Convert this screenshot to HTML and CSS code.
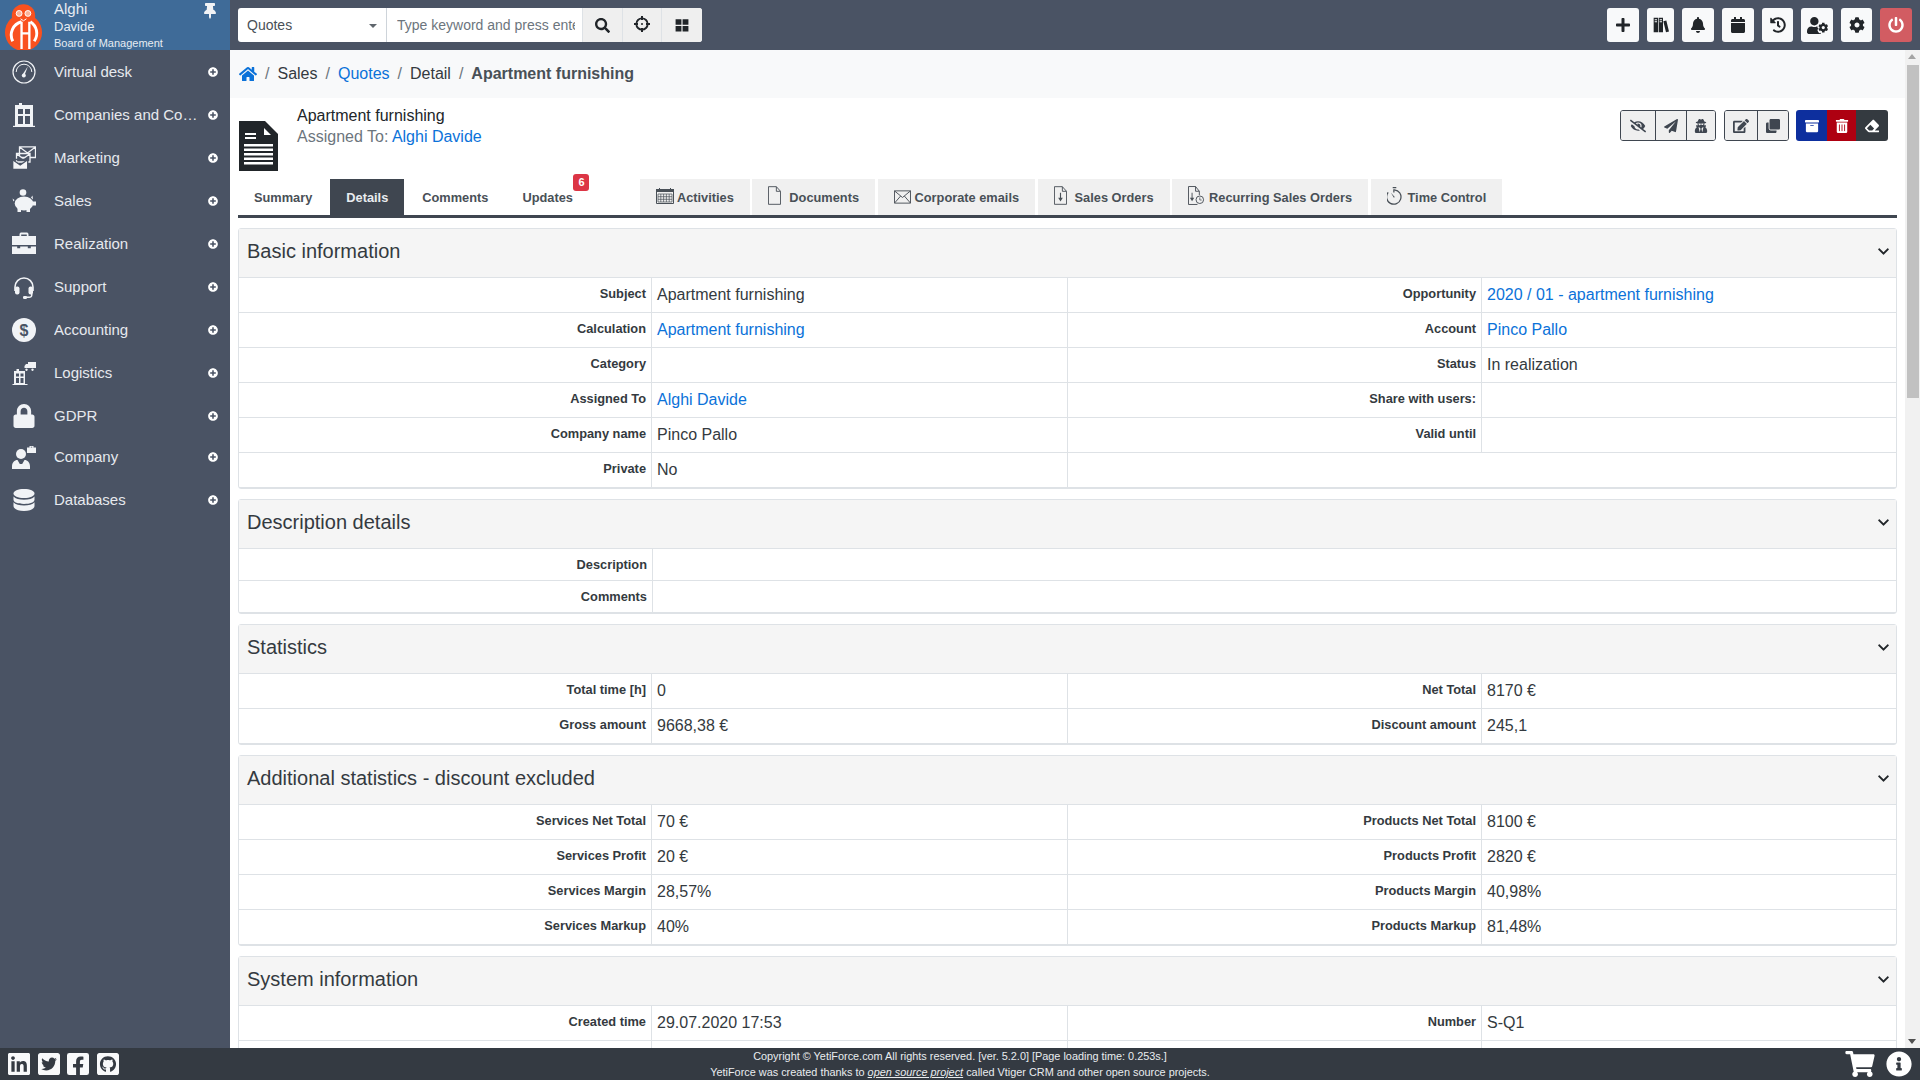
FILE: index.html
```html
<!DOCTYPE html>
<html lang="en">
<head>
  <meta charset="UTF-8" />
  <title>Apartment furnishing - Quotes</title>
  <link rel="stylesheet" href="styles.css">
</head>
<body>

<!-- icon sprite -->
<svg class="sprite" xmlns="http://www.w3.org/2000/svg">
  <symbol id="i-home" viewBox="0 0 576 512"><path d="M280.37 148.26L96 300.11V464a16 16 0 0 0 16 16l112.06-.29a16 16 0 0 0 15.92-16V368a16 16 0 0 1 16-16h64a16 16 0 0 1 16 16v95.64a16 16 0 0 0 16 16.05L464 480a16 16 0 0 0 16-16V300L295.67 148.26a12.19 12.19 0 0 0-15.3 0zM571.6 251.47L488 182.56V44.05a12 12 0 0 0-12-12h-56a12 12 0 0 0-12 12v72.61L318.47 43a48 48 0 0 0-61 0L4.34 251.47a12 12 0 0 0-1.6 16.9l25.5 31A12 12 0 0 0 45.15 301l235.22-193.74a12.19 12.19 0 0 1 15.3 0L530.9 301a12 12 0 0 0 16.9-1.6l25.5-31a12 12 0 0 0-1.7-16.93z"/></symbol>
  <symbol id="i-search" viewBox="0 0 512 512"><path d="M505 442.7L405.3 343c-4.5-4.5-10.6-7-17-7H372c27.6-35.3 44-79.7 44-128C416 93.1 322.9 0 208 0S0 93.1 0 208s93.1 208 208 208c48.3 0 92.7-16.4 128-44v16.3c0 6.4 2.5 12.5 7 17l99.7 99.7c9.4 9.4 24.6 9.4 33.9 0l28.3-28.3c9.4-9.4 9.4-24.6.1-34zM208 336c-70.7 0-128-57.2-128-128 0-70.7 57.2-128 128-128 70.7 0 128 57.2 128 128 0 70.7-57.2 128-128 128z"/></symbol>
  <symbol id="i-plus" viewBox="0 0 448 512"><path d="M416 208H272V64c0-17.67-14.33-32-32-32h-32c-17.67 0-32 14.33-32 32v144H32c-17.67 0-32 14.33-32 32v32c0 17.67 14.33 32 32 32h144v144c0 17.67 14.33 32 32 32h32c17.67 0 32-14.33 32-32V304h144c17.67 0 32-14.33 32-32v-32c0-17.67-14.33-32-32-32z"/></symbol>
  <symbol id="i-bell" viewBox="0 0 448 512"><path d="M224 512c35.32 0 63.97-28.65 63.97-64H160.03c0 35.35 28.65 64 63.97 64zm215.39-149.71c-19.32-20.76-55.47-51.99-55.47-154.29 0-77.7-54.48-139.9-127.94-155.16V32c0-17.67-14.32-32-31.98-32s-31.98 14.33-31.98 32v20.84C118.56 68.1 64.08 130.3 64.08 208c0 102.3-36.15 133.53-55.47 154.29-6 6.45-8.66 14.16-8.61 21.71.11 16.4 12.98 32 32.1 32h383.8c19.12 0 32-15.6 32.1-32 .05-7.55-2.61-15.27-8.61-21.71z"/></symbol>
  <symbol id="i-calendar" viewBox="0 0 448 512"><path d="M12 192h424c6.6 0 12 5.4 12 12v260c0 26.5-21.5 48-48 48H48c-26.5 0-48-21.5-48-48V204c0-6.6 5.4-12 12-12zm436-44v-36c0-26.5-21.5-48-48-48h-48V12c0-6.6-5.4-12-12-12h-40c-6.6 0-12 5.4-12 12v52H160V12c0-6.6-5.4-12-12-12h-40c-6.6 0-12 5.4-12 12v52H48C21.5 64 0 85.5 0 112v36c0 6.6 5.4 12 12 12h424c6.6 0 12-5.4 12-12z"/></symbol>
  <symbol id="i-history" viewBox="0 0 512 512"><path d="M504 255.531c.253 136.64-111.18 248.372-247.82 248.468-59.015.042-113.223-20.53-155.822-54.911-11.077-8.94-11.905-25.541-1.839-35.607l11.267-11.267c8.609-8.609 22.353-9.551 31.891-1.984C173.062 425.135 212.781 440 256 440c101.705 0 184-82.311 184-184 0-101.705-82.311-184-184-184-48.814 0-93.149 18.969-126.068 49.932l50.754 50.754c10.08 10.08 2.941 27.314-11.313 27.314H24c-8.837 0-16-7.163-16-16V38.627c0-14.254 17.234-21.393 27.314-11.314l49.372 49.372C129.209 34.136 189.552 8 256 8c136.81 0 247.747 110.78 248 247.531zm-180.912 78.784l9.823-12.63c8.138-10.463 6.253-25.542-4.21-33.679L288 256.349V152c0-13.255-10.745-24-24-24h-16c-13.255 0-24 10.745-24 24v135.651l65.409 50.874c10.463 8.137 25.541 6.253 33.679-4.21z"/></symbol>
  <symbol id="i-cog" viewBox="0 0 512 512"><path d="M487.4 315.7l-42.6-24.6c4.3-23.2 4.3-47 0-70.2l42.6-24.6c4.9-2.8 7.1-8.6 5.5-14-11.1-35.6-30-67.8-54.7-94.6-3.8-4.1-10-5.1-14.8-2.3L380.8 110c-17.9-15.4-38.5-27.3-60.8-35.1V25.8c0-5.6-3.9-10.5-9.4-11.7-36.7-8.2-74.3-7.8-109.2 0-5.5 1.2-9.4 6.1-9.4 11.7V75c-22.2 7.9-42.8 19.8-60.8 35.1L88.7 85.5c-4.9-2.8-11-1.9-14.8 2.3-24.7 26.7-43.6 58.9-54.7 94.6-1.7 5.4.6 11.2 5.5 14L67.3 221c-4.3 23.2-4.3 47 0 70.2l-42.6 24.6c-4.9 2.8-7.1 8.6-5.5 14 11.1 35.6 30 67.8 54.7 94.6 3.8 4.1 10 5.1 14.8 2.3l42.6-24.6c17.9 15.4 38.5 27.3 60.8 35.1v49.2c0 5.6 3.9 10.5 9.4 11.7 36.7 8.2 74.3 7.8 109.2 0 5.5-1.2 9.4-6.1 9.4-11.7v-49.2c22.2-7.9 42.8-19.8 60.8-35.1l42.6 24.6c4.9 2.8 11 1.9 14.8-2.3 24.7-26.7 43.6-58.9 54.7-94.6 1.5-5.5-.7-11.3-5.6-14.1zM256 336c-44.1 0-80-35.9-80-80s35.9-80 80-80 80 35.9 80 80-35.9 80-80 80z"/></symbol>
  <symbol id="i-power" viewBox="0 0 512 512"><path d="M400 54.1c63 45 104 118.6 104 201.9 0 136.8-110.8 247.7-247.5 248C120 504.3 8.2 393 8 256.4 7.9 173.1 48.9 99.3 111.8 54.2c11.7-8.3 28-4.8 35 7.7L162.6 90c5.9 10.5 3.1 23.8-6.6 31-41.5 30.8-68 79.6-68 134.9-.1 92.3 74.5 168.1 168 168.1 91.6 0 168.6-74.2 168-169.1-.3-51.8-24.7-101.8-68.1-134-9.7-7.2-12.4-20.5-6.5-30.9l15.8-28.1c7-12.4 23.2-16.1 34.8-7.8zM296 264V24c0-13.3-10.7-24-24-24h-32c-13.3 0-24 10.7-24 24v240c0 13.3 10.7 24 24 24h32c13.3 0 24-10.7 24-24z"/></symbol>
  <symbol id="i-plus-circle" viewBox="0 0 512 512"><path d="M256 8C119 8 8 119 8 256s111 248 248 248 248-111 248-248S393 8 256 8zm144 276c0 6.6-5.4 12-12 12h-92v92c0 6.6-5.4 12-12 12h-56c-6.6 0-12-5.4-12-12v-92h-92c-6.6 0-12-5.4-12-12v-56c0-6.6 5.4-12 12-12h92v-92c0-6.6 5.4-12 12-12h56c6.6 0 12 5.4 12 12v92h92c6.6 0 12 5.4 12 12v56z"/></symbol>
  <symbol id="i-chevron" viewBox="0 0 448 512"><path d="M207.029 381.476L12.686 187.132c-9.373-9.373-9.373-24.569 0-33.941l22.667-22.667c9.357-9.357 24.522-9.375 33.901-.04L224 284.505l154.745-154.021c9.379-9.335 24.544-9.317 33.901.04l22.667 22.667c9.373 9.373 9.373 24.569 0 33.941L240.971 381.476c-9.373 9.372-24.569 9.372-33.942 0z"/></symbol>
  <symbol id="i-pin" viewBox="0 0 384 512"><path d="M298.028 214.267L285.793 96H328c13.255 0 24-10.745 24-24V24c0-13.255-10.745-24-24-24H56C42.745 0 32 10.745 32 24v48c0 13.255 10.745 24 24 24h42.207L85.972 214.267C37.465 236.82 0 277.261 0 328c0 13.255 10.745 24 24 24h136v104.007c0 1.242.289 2.467.845 3.578l24 48c2.941 5.882 11.364 5.893 14.311 0l24-48a8.008 8.008 0 0 0 .845-3.578V352h136c13.255 0 24-10.745 24-24-.001-51.183-37.983-91.42-85.973-113.733z"/></symbol>
  <symbol id="i-cart" viewBox="0 0 576 512"><path d="M528.12 301.319l47.273-208C578.806 78.301 567.391 64 551.99 64H159.208l-9.166-44.81C147.758 8.021 137.93 0 126.529 0H24C10.745 0 0 10.745 0 24v16c0 13.255 10.745 24 24 24h69.883l70.248 343.435C147.325 417.1 136 435.222 136 456c0 30.928 25.072 56 56 56s56-25.072 56-56c0-15.674-6.447-29.835-16.824-40h209.647C430.447 426.165 424 440.326 424 456c0 30.928 25.072 56 56 56s56-25.072 56-56c0-22.172-12.888-41.332-31.579-50.405l5.517-24.276c3.413-15.018-8.002-29.319-23.403-29.319H218.117l-6.545-32h293.145c11.206 0 20.92-7.754 23.403-18.681z"/></symbol>
  <symbol id="i-info" viewBox="0 0 512 512"><path d="M256 8C119.043 8 8 119.083 8 256c0 136.997 111.043 248 248 248s248-111.003 248-248C504 119.083 392.957 8 256 8zm0 110c23.196 0 42 18.804 42 42s-18.804 42-42 42-42-18.804-42-42 18.804-42 42-42zm56 254c0 6.627-5.373 12-12 12h-88c-6.627 0-12-5.373-12-12v-24c0-6.627 5.373-12 12-12h12v-64h-12c-6.627 0-12-5.373-12-12v-24c0-6.627 5.373-12 12-12h64c6.627 0 12 5.373 12 12v100h12c6.627 0 12 5.373 12 12v24z"/></symbol>
  <symbol id="i-linkedin" viewBox="0 32 448 448"><path d="M416 32H31.9C14.3 32 0 46.5 0 64.3v383.4C0 465.5 14.3 480 31.9 480H416c17.6 0 32-14.5 32-32.3V64.3c0-17.8-14.4-32.3-32-32.3zM135.4 416H69V202.2h66.5V416zm-33.2-243c-21.3 0-38.5-17.3-38.5-38.5S80.9 96 102.2 96c21.2 0 38.5 17.3 38.5 38.5 0 21.3-17.2 38.5-38.5 38.5zm282.1 243h-66.4V312c0-24.8-.5-56.7-34.5-56.7-34.6 0-39.9 27-39.9 54.9V416h-66.4V202.2h63.7v29.2h.9c8.9-16.8 30.6-34.5 62.9-34.5 67.2 0 79.7 44.3 79.7 101.9V416z"/></symbol>
  <symbol id="i-twitter" viewBox="0 32 448 448"><path d="M400 32H48C21.5 32 0 53.5 0 80v352c0 26.5 21.5 48 48 48h352c26.5 0 48-21.5 48-48V80c0-26.5-21.5-48-48-48zm-48.9 158.8c.2 2.8.2 5.7.2 8.5 0 86.7-66 186.6-186.6 186.6-37.2 0-71.7-10.8-100.7-29.4 5.3.6 10.4.8 15.8.8 30.7 0 58.9-10.4 81.4-28-28.8-.6-53-19.5-61.3-45.5 10.1 1.5 19.2 1.5 29.6-1.2-30-6.1-52.5-32.5-52.5-64.4v-.8c8.7 4.9 18.9 7.9 29.6 8.3a65.447 65.447 0 0 1-29.2-54.6c0-12.2 3.2-23.4 8.9-33.1 32.3 39.8 80.8 65.8 135.2 68.6-9.3-44.5 24-80.6 64-80.6 18.9 0 35.9 7.9 47.9 20.7 14.8-2.8 29-8.3 41.6-15.8-4.9 15.2-15.1 28-28.6 36 13.1-1.4 25.8-5 37.5-10.1-8.9 13.1-20 24.7-32.7 33.9z"/></symbol>
  <symbol id="i-facebook" viewBox="0 32 448 448"><path d="M400 32H48A48 48 0 0 0 0 80v352a48 48 0 0 0 48 48h137.25V327.69h-63V256h63v-54.64c0-62.15 37-96.48 93.67-96.48 27.14 0 55.52 4.84 55.52 4.84v61h-31.27c-30.81 0-40.42 19.12-40.42 38.73V256h68.78l-11 71.69h-57.78V480H400a48 48 0 0 0 48-48V80a48 48 0 0 0-48-48z"/></symbol>
  <symbol id="i-github" viewBox="0 32 448 448"><path d="M400 32H48C21.5 32 0 53.5 0 80v352c0 26.5 21.5 48 48 48h352c26.5 0 48-21.5 48-48V80c0-26.5-21.5-48-48-48zM277.3 415.7c-8.4 1.5-11.5-3.7-11.5-8 0-5.4.2-33 .2-55.3 0-15.6-5.2-25.5-11.3-30.7 37-4.1 76-9.2 76-73.1 0-18.2-6.5-27.3-17.1-39 1.7-4.3 7.4-22-1.7-45-13.9-4.3-45.7 17.9-45.7 17.9-13.2-3.7-27.5-5.6-41.6-5.6-14.1 0-28.4 1.9-41.6 5.6 0 0-31.8-22.2-45.7-17.9-9.1 22.9-3.5 40.6-1.7 45-10.6 11.7-15.6 20.8-15.6 39 0 63.6 37.3 69 74.3 73.1-4.8 4.3-9.1 11.7-10.6 22.3-9.5 4.3-33.8 11.7-48.3-13.9-9.1-15.8-25.5-17.1-25.5-17.1-16.2-.2-1.1 10.2-1.1 10.2 10.8 5 18.4 24.2 18.4 24.2 9.7 29.7 56.1 19.7 56.1 19.7 0 13.9.2 36.5.2 40.6 0 4.3-3 9.5-11.5 8-66-22.1-112.2-84.9-112.2-158.3 0-91.8 70.2-161.5 162-161.5S388 165.6 388 257.4c.1 73.4-44.7 136.3-110.7 158.3z"/></symbol>
  <symbol id="i-plane" viewBox="0 0 512 512"><path d="M476 3.2L12.5 270.6c-18.1 10.4-15.8 35.6 2.2 43.2L121 358.4l287.3-253.2c5.5-4.9 13.3 2.6 8.6 8.3L176 407v80.5c0 23.6 28.5 32.9 42.5 15.8L282 426l124.6 52.2c14.2 6 30.4-2.9 33-18.2l72-432C515 7.8 493.3-6.8 476 3.2z"/></symbol>
  <symbol id="i-edit" viewBox="0 0 576 512"><path d="M402.6 83.2l90.2 90.2c3.8 3.8 3.8 10 0 13.8L274.4 405.6l-92.8 10.3c-12.4 1.4-22.9-9.1-21.5-21.5l10.3-92.8L388.8 83.2c3.8-3.8 10-3.8 13.8 0zm162-22.9l-48.8-48.8c-15.2-15.2-39.9-15.2-55.2 0l-35.4 35.4c-3.8 3.8-3.8 10 0 13.8l90.2 90.2c3.8 3.8 10 3.8 13.8 0l35.4-35.4c15.2-15.3 15.2-40 0-55.2zM384 346.2V448H64V128h229.8c3.2 0 6.2-1.3 8.5-3.5l40-40c7.6-7.6 2.2-20.5-8.5-20.5H48C21.5 64 0 85.5 0 112v352c0 26.5 21.5 48 48 48h352c26.5 0 48-21.5 48-48V306.2c0-10.7-12.9-16-20.5-8.5l-40 40c-2.2 2.3-3.5 5.3-3.5 8.5z"/></symbol>
  <symbol id="i-clone" viewBox="0 0 512 512"><path d="M464 0c26.51 0 48 21.49 48 48v288c0 26.51-21.49 48-48 48H176c-26.51 0-48-21.49-48-48V48c0-26.51 21.49-48 48-48h288M176 416c-44.112 0-80-35.888-80-80V128H48c-26.51 0-48 21.49-48 48v288c0 26.51 21.49 48 48 48h288c26.51 0 48-21.49 48-48v-48H176z"/></symbol>
  <symbol id="i-archive" viewBox="0 0 512 512"><path d="M32 448c0 17.7 14.3 32 32 32h384c17.7 0 32-14.3 32-32V160H32v288zm160-212c0-6.6 5.4-12 12-12h104c6.6 0 12 5.4 12 12v8c0 6.6-5.4 12-12 12H204c-6.6 0-12-5.4-12-12v-8zM480 32H32C14.3 32 0 46.3 0 64v48c0 8.8 7.2 16 16 16h480c8.8 0 16-7.2 16-16V64c0-17.7-14.3-32-32-32z"/></symbol>
  <symbol id="i-trash" viewBox="0 0 448 512"><path d="M32 464a48 48 0 0 0 48 48h288a48 48 0 0 0 48-48V128H32zm272-256a16 16 0 0 1 32 0v224a16 16 0 0 1-32 0zm-96 0a16 16 0 0 1 32 0v224a16 16 0 0 1-32 0zm-96 0a16 16 0 0 1 32 0v224a16 16 0 0 1-32 0zM432 32H312l-9.4-18.7A24 24 0 0 0 281.1 0H166.8a23.72 23.72 0 0 0-21.4 13.3L136 32H16A16 16 0 0 0 0 48v32a16 16 0 0 0 16 16h416a16 16 0 0 0 16-16V48a16 16 0 0 0-16-16z"/></symbol>
  <symbol id="i-eraser" viewBox="0 0 512 512"><path d="M497.941 273.941c18.745-18.745 18.745-49.137 0-67.882l-160-160c-18.745-18.745-49.136-18.746-67.883 0l-256 256c-18.745 18.745-18.745 49.137 0 67.882l96 96A48.004 48.004 0 0 0 144 480h356c6.627 0 12-5.373 12-12v-40c0-6.627-5.373-12-12-12H355.883l142.058-142.059zm-302.627-62.627l137.373 137.373L265.373 416H150.628l-80-80 124.686-124.686z"/></symbol>
  <symbol id="i-eye-slash" viewBox="0 0 640 512"><path d="M320 400c-75.85 0-137.25-58.71-142.9-133.11L72.2 185.82c-13.79 17.3-26.48 35.59-36.72 55.59a32.35 32.35 0 0 0 0 29.19C89.71 376.41 197.07 448 320 448c26.91 0 52.87-4 77.89-10.46L346 397.39a144.13 144.13 0 0 1-26 2.61zm313.82 58.1l-110.55-85.44a331.25 331.25 0 0 0 81.25-102.07 32.35 32.35 0 0 0 0-29.19C550.29 135.59 442.93 64 320 64a308.15 308.15 0 0 0-147.32 37.7L45.46 3.37A16 16 0 0 0 23 6.18L3.37 31.45A16 16 0 0 0 6.18 53.9l588.36 454.73a16 16 0 0 0 22.46-2.81l19.64-25.27a16 16 0 0 0-2.82-22.45zm-183.72-142l-39.3-30.38A94.75 94.75 0 0 0 416 256a94.76 94.76 0 0 0-121.31-92.21A47.65 47.65 0 0 1 304 192a46.64 46.64 0 0 1-1.54 10l-73.61-56.89A142.31 142.31 0 0 1 320 112a143.92 143.92 0 0 1 144 144c0 21.63-5.29 41.79-13.9 60.11z"/></symbol>
  <symbol id="i-secret" viewBox="0 0 448 512"><path d="M383.9 308.3l23.9-62.6c4-10.5-3.7-21.7-15-21.7h-58.5c11-18.9 17.8-40.6 17.8-64v-.3c39.2-7.8 64-19.1 64-31.7 0-13.3-27.3-25.1-70.1-33-9.2-32.8-27-65.8-40.6-82.8-9.5-11.9-25.9-15.6-39.5-8.8l-27.6 13.8c-9 4.5-19.6 4.5-28.6 0L182.1 3.4c-13.6-6.8-30-3.1-39.5 8.8-13.5 17-31.4 50-40.6 82.8-42.7 7.9-70 19.7-70 33 0 12.6 24.8 23.9 64 31.7v.3c0 23.4 6.8 45.1 17.8 64H56.3c-11.5 0-19.2 11.7-14.7 22.3l25.8 60.2C27.3 329.8 0 372.7 0 422.4v44.8C0 491.9 20.1 512 44.8 512h358.4c24.7 0 44.8-20.1 44.8-44.8v-44.8c0-48.4-25.8-90.4-64.1-114.1zM176 480l-41.6-192 49.6 32 24 40-32 120zm96 0l-32-120 24-40 49.6-32L272 480zm41.7-298.5c-3.9 11.9-7 24.6-16.5 33.4-10.1 9.3-48 22.4-64-25-2.8-8.4-15.4-8.4-18.3 0-17 50.2-56 32.4-64 25-9.5-8.8-12.7-21.5-16.5-33.4-.8-2.5-6.3-5.7-6.3-5.8v-10.8c28.3 3.6 61 5.8 96 5.8s67.7-2.1 96-5.8v10.8c-.1.1-5.6 3.2-6.4 5.8z"/></symbol>
  <symbol id="i-user-cog" viewBox="0 0 640 512"><path d="M610.5 341.3c2.6-14.1 2.6-28.5 0-42.6l25.8-14.9c3-1.7 4.3-5.2 3.3-8.5-6.7-21.6-18.2-41.2-33.2-57.4-2.3-2.5-6-3.1-9-1.4l-25.8 14.9c-10.9-9.3-23.4-16.5-36.9-21.3v-29.8c0-3.4-2.4-6.4-5.7-7.1-22.3-5-45-4.8-66.2 0-3.3.7-5.7 3.7-5.7 7.1v29.8c-13.5 4.8-26 12-36.9 21.3l-25.8-14.9c-2.9-1.7-6.7-1.1-9 1.4-15 16.2-26.5 35.8-33.2 57.4-1 3.3.4 6.8 3.3 8.5l25.8 14.9c-2.6 14.1-2.6 28.5 0 42.6l-25.8 14.9c-3 1.7-4.3 5.2-3.3 8.5 6.7 21.6 18.2 41.1 33.2 57.4 2.3 2.5 6 3.1 9 1.4l25.8-14.9c10.9 9.3 23.4 16.5 36.9 21.3v29.8c0 3.4 2.4 6.4 5.7 7.1 22.3 5 45 4.8 66.2 0 3.3-.7 5.7-3.7 5.7-7.1v-29.8c13.5-4.8 26-12 36.9-21.3l25.8 14.9c2.9 1.7 6.7 1.1 9-1.4 15-16.2 26.5-35.8 33.2-57.4 1-3.3-.4-6.8-3.3-8.5l-25.8-14.9zM496 368.5c-26.8 0-48.5-21.8-48.5-48.5s21.8-48.5 48.5-48.5 48.5 21.8 48.5 48.5-21.7 48.5-48.5 48.5zM224 256c70.7 0 128-57.3 128-128S294.7 0 224 0 96 57.3 96 128s57.3 128 128 128zm201.2 226.5c-2.3-1.2-4.6-2.6-6.8-3.9l-7.9 4.6c-6 3.4-12.8 5.3-19.6 5.3-10.9 0-21.4-4.6-28.9-12.6-18.3-19.8-32.3-43.9-40.2-69.6-5.5-17.7 1.9-36.4 17.9-45.7l7.9-4.6c-.1-2.6-.1-5.2 0-7.8l-7.9-4.6c-16-9.2-23.4-28-17.9-45.7.9-2.9 2.2-5.8 3.2-8.7-3.8-.3-7.5-1.2-11.4-1.2h-16.7c-22.2 10.2-46.9 16-72.9 16s-50.6-5.8-72.9-16h-16.7C60.2 288 0 348.2 0 422.4V464c0 26.5 21.5 48 48 48h352c10.1 0 19.5-3.2 27.2-8.5-1.2-3.8-2-7.7-2-11.8v-9.2z"/></symbol>
  <symbol id="i-lock" viewBox="0 0 448 512"><path d="M400 224h-24v-72C376 68.2 307.8 0 224 0S72 68.2 72 152v72H48c-26.5 0-48 21.5-48 48v192c0 26.5 21.5 48 48 48h352c26.5 0 48-21.5 48-48V272c0-26.5-21.5-48-48-48zm-104 0H152v-72c0-39.7 32.3-72 72-72s72 32.3 72 72v72z"/></symbol>
  <symbol id="i-books" viewBox="0 0 24 24"><path d="M1 1h6.500v22H1zM8.500 1H15v22H8.500zM15.500 6.500l4.500-1.200L24 21.800l-4.500 1.200z"/><path fill="#f8f9fa" d="M2.500 3.500h3.500v1.500H2.500zM10 3.500h3.500v1.500H10zM2.500 6.500h3.500V8H2.500zM10 6.500h3.500V8H10z"/></symbol>
  <symbol id="i-target" viewBox="0 0 24 24"><circle cx="12" cy="12" r="8.500" fill="none" stroke="currentColor" stroke-width="2.800"/><path d="M10.500 0h3v6h-3zM10.500 18h3v6h-3zM0 10.500h6v3H0zM18 10.500h6v3h-6z"/><circle cx="12" cy="12" r="1.500"/></symbol>
  <symbol id="i-grid" viewBox="0 0 24 24"><path d="M1 2h10v9.500H1zM13 2h10v9.500H13zM1 13.500h10V23H1zM13 13.500h10V23H13z"/></symbol>

  <!-- sidebar module icons -->
  <symbol id="m-gauge" viewBox="0 0 24 24"><circle cx="12" cy="12" r="11" fill="none" stroke="currentColor" stroke-width="1.200"/><path d="M4.200 12a7.800 7.800 0 0 1 15.600 0" fill="none" stroke="currentColor" stroke-width="1"/><path d="M15.800 6.500l-3 8-1.800-.8z"/><circle cx="11.800" cy="15.600" r="2"/></symbol>
  <symbol id="m-building" viewBox="0 0 24 24"><path fill-rule="evenodd" d="M3 2h4V0h3v2h11v21H3zM6 6v5h5V6zM13 6v5h5V6zM6 13v8h5v-8zM13 13v8h5v-8z"/><path d="M1 22.800h22V24H1z"/></symbol>
  <symbol id="m-mail" viewBox="0 0 24 24"><g fill="none" stroke="currentColor" stroke-width="1.300"><path d="M7.500.8h16v10.700h-16zM7.500 1l8 6 8-6"/><path d="M4.500 7.500h13.500v8.500H4.500zM4.500 7.700l6.700 5 6.800-5" fill="#4a5364"/><path d="M.7 13.500h15v9.800H.7zM.7 13.700l7.500 5.300 7.500-5.300" fill="#f4f5f7" stroke="#4a5364"/></g></symbol>
  <symbol id="m-piggy" viewBox="0 0 24 24"><circle cx="11" cy="3.500" r="3.300"/><ellipse cx="12" cy="14.500" rx="9.300" ry="7"/><path d="M19 8.500l1.500-2 .5 4zM2.500 11l-2-1.500 1 3zM5.500 18h3.500v5H5.500zM14.500 18H18v5h-3.500z"/><path d="M21 12.500h3v4h-3z"/></symbol>
  <symbol id="m-briefcase" viewBox="0 0 24 24"><path fill-rule="evenodd" d="M7.500 4V2.500C7.500 1 8.500.5 9.500.5h5c1 0 2 .5 2 2V4H24v9H0V4zM9.200 4h5.600V2.500H9.200z"/><path d="M0 14.500h5.200v1.800h3v-1.800h7.600v1.800h3v-1.800H24V22H0z"/></symbol>
  <symbol id="m-headset" viewBox="0 0 24 24"><path d="M2.200 12a9.800 9.800 0 0 1 19.600 0v4h-1.600v-4a8.200 8.200 0 0 0-16.400 0v4H2.200z"/><rect x="3" y="11.500" width="4.500" height="8" rx="2"/><rect x="16.500" y="11.500" width="4.500" height="8" rx="2"/><path d="M20.500 18.500v1.500c0 2-1.500 3-3.500 3h-3v-1.400h3c1.300 0 2-.5 2-1.600v-1.500z"/><rect x="11" y="21" width="4" height="3" rx="1.200"/></symbol>
  <symbol id="m-dollar" viewBox="0 0 24 24"><circle cx="12" cy="12" r="12"/><text x="12" y="17.500" text-anchor="middle" font-family="Liberation Sans, sans-serif" font-size="16" font-weight="700" fill="#4a5364">$</text></symbol>
  <symbol id="m-logistics" viewBox="0 0 24 24"><path fill-rule="evenodd" d="M2 10h2.500V8H7v2h6v13H2zM4 12.500v3h3v-3zM8.500 12.500v3h3v-3zM4 17v5h3v-5zM8.500 17v5h3v-5z"/><path d="M.5 23h15v1H.5zM16 1h8v6h-8zM14 3h2v4h-3.500v-2zM14.500 7.500a1.200 1.200 0 1 0 .01 0zM20.500 7.500a1.200 1.200 0 1 0 .01 0z"/></symbol>
  <symbol id="m-company" viewBox="0 0 24 24"><circle cx="9" cy="9" r="5"/><path d="M0 24v-2.500c0-4 2.500-6.500 5.500-6.500l2.300 4h2.400l2.300-4c3 0 5.500 2.500 5.500 6.500V24z"/><path fill-rule="evenodd" d="M15 2.500h2.500V1h4v1.500H24V8h-9zM18.800 1.800v.7h1.400v-.7z"/></symbol>
  <symbol id="m-database" viewBox="0 0 24 24"><path d="M12 1C5.800 1 1.500 3 1.500 5.500S5.800 10 12 10s10.500-2 10.500-4.500S18.200 1 12 1z"/><path d="M1.500 8.500c1.800 2.300 5.800 3.300 10.500 3.300s8.700-1 10.500-3.300v3.300c0 2.400-4.300 4.200-10.500 4.200S1.500 14.200 1.500 11.800z"/><path d="M1.500 14.300c1.800 2.300 5.800 3.300 10.500 3.300s8.700-1 10.500-3.300V18c0 2.600-4.300 5-10.500 5S1.500 20.600 1.500 18z"/></symbol>

  <!-- related tab icons -->
  <symbol id="t-calendar" viewBox="0 0 18 16"><path fill="none" stroke="currentColor" d="M.5 1.500h17v14H.5z"/><path d="M0 1h18v3H0zM3 0h1v2H3zM14 0h1v2h-1z"/><path fill="none" stroke="currentColor" stroke-width=".7" d="M2 6h14v8H2zM2 8.700h14M2 11.300h14M4.800 6v8M7.600 6v8M10.400 6v8M13.200 6v8"/></symbol>
  <symbol id="t-doc" viewBox="0 0 14 20"><path fill="none" stroke="currentColor" d="M.5.500h8.500l4.500 5v14H.5zM9 .500v5h4.500"/></symbol>
  <symbol id="t-mail" viewBox="0 0 18 14"><path fill="none" stroke="currentColor" d="M.5.500h17v13H.5zM.5.500l8.500 7 8.500-7M.5 13.500l6.500-7.500M17.500 13.500l-6.500-7.500"/></symbol>
  <symbol id="t-doc-down" viewBox="0 0 14 20"><path fill="none" stroke="currentColor" d="M.5.500h8.500l4.500 5v14H.5zM9 .500v5h4.500"/><path d="M6.400 7h1.200v7h-1.200zM4.500 12.500h5L7 16.500z"/></symbol>
  <symbol id="t-doc-clock" viewBox="0 0 18 20"><path fill="none" stroke="currentColor" d="M10 19.500H.5V.5h7.500l4 5v4M8 .5v5h4"/><path d="M3.800 7h1v7h-1zM2 12.500h4.600L4.300 16z"/><circle cx="12.500" cy="14.500" r="4" fill="none" stroke="currentColor"/><path fill="none" stroke="currentColor" stroke-width=".8" d="M12.500 12v2.800h2"/></symbol>
  <symbol id="t-stopwatch" viewBox="0 0 16 20"><path d="M1.500 6.500A7.300 7.300 0 1 0 8 3.800V6.200h-1.400V2.400H8a8.700 8.700 0 1 1-7.600 3.200z"/><path d="M6 0h4v1.500H6zM4 6.500l4.300 4.500-1 1z"/></symbol>
</svg>

<div class="app">
  <div class="shell">

    <!-- left menu -->
    <aside class="sidebar">
      <div class="user-box">
        <svg class="user-logo" viewBox="0 0 40 54">
          <circle cx="20" cy="12" r="12" fill="#f9511f"/>
          <circle cx="20" cy="29" r="19" fill="#f9511f"/>
          <circle cx="15.500" cy="9.500" r="3" fill="#fbb49b" stroke="#fff" stroke-width="1"/>
          <circle cx="24.500" cy="9.500" r="3" fill="#fbb49b" stroke="#fff" stroke-width="1"/>
          <path d="M17 15l3 2 3-2" fill="none" stroke="#fff" stroke-width="1"/>
          <path d="M9 38A14 14 0 0 1 18 18M27 18A14 14 0 0 1 31 38" fill="none" stroke="#fff" stroke-width="3"/>
          <path d="M18 18v28M26 18v28M18 30h8" fill="none" stroke="#fff" stroke-width="2.400"/>
        </svg>
        <div class="user-text">
          <div class="user-first">Alghi</div>
          <div class="user-last">Davide</div>
          <div class="user-role">Board of Management</div>
        </div>
        <svg class="user-pin"><use href="#i-pin"/></svg>
      </div>
      <nav class="menu">
        <a class="menu-item"><svg class="menu-icon"><use href="#m-gauge"/></svg><span class="menu-label">Virtual desk</span><svg class="menu-plus"><use href="#i-plus-circle"/></svg></a>
        <a class="menu-item"><svg class="menu-icon"><use href="#m-building"/></svg><span class="menu-label">Companies and Contacts</span><svg class="menu-plus"><use href="#i-plus-circle"/></svg></a>
        <a class="menu-item"><svg class="menu-icon"><use href="#m-mail"/></svg><span class="menu-label">Marketing</span><svg class="menu-plus"><use href="#i-plus-circle"/></svg></a>
        <a class="menu-item"><svg class="menu-icon"><use href="#m-piggy"/></svg><span class="menu-label">Sales</span><svg class="menu-plus"><use href="#i-plus-circle"/></svg></a>
        <a class="menu-item"><svg class="menu-icon"><use href="#m-briefcase"/></svg><span class="menu-label">Realization</span><svg class="menu-plus"><use href="#i-plus-circle"/></svg></a>
        <a class="menu-item"><svg class="menu-icon"><use href="#m-headset"/></svg><span class="menu-label">Support</span><svg class="menu-plus"><use href="#i-plus-circle"/></svg></a>
        <a class="menu-item"><svg class="menu-icon"><use href="#m-dollar"/></svg><span class="menu-label">Accounting</span><svg class="menu-plus"><use href="#i-plus-circle"/></svg></a>
        <a class="menu-item"><svg class="menu-icon"><use href="#m-logistics"/></svg><span class="menu-label">Logistics</span><svg class="menu-plus"><use href="#i-plus-circle"/></svg></a>
        <a class="menu-item"><svg class="menu-icon"><use href="#i-lock"/></svg><span class="menu-label">GDPR</span><svg class="menu-plus"><use href="#i-plus-circle"/></svg></a>
        <a class="menu-item menu-item-tight"><svg class="menu-icon"><use href="#m-company"/></svg><span class="menu-label">Company</span><svg class="menu-plus"><use href="#i-plus-circle"/></svg></a>
        <a class="menu-item"><svg class="menu-icon"><use href="#m-database"/></svg><span class="menu-label">Databases</span><svg class="menu-plus"><use href="#i-plus-circle"/></svg></a>
      </nav>
    </aside>

    <div class="main">
      <!-- top bar -->
      <header class="topbar">
        <div class="search">
          <div class="search-module">Quotes<span class="caret"></span></div>
          <input class="search-input" type="text" placeholder="Type keyword and press enter">
          <button class="search-btn"><svg class="icon-15"><use href="#i-search"/></svg></button>
          <button class="search-btn search-btn-narrow"><svg class="icon-16 icon-up"><use href="#i-target"/></svg></button>
          <button class="search-btn search-btn-last"><svg class="icon-14"><use href="#i-grid"/></svg></button>
        </div>
        <div class="top-actions">
          <button class="top-btn"><svg class="icon-16"><use href="#i-plus"/></svg></button>
          <button class="top-btn top-btn-small"><svg class="icon-16"><use href="#i-books"/></svg></button>
          <button class="top-btn"><svg class="icon-16"><use href="#i-bell"/></svg></button>
          <button class="top-btn"><svg class="icon-16"><use href="#i-calendar"/></svg></button>
          <button class="top-btn top-btn-mid"><svg class="icon-16"><use href="#i-history"/></svg></button>
          <button class="top-btn"><svg class="icon-20"><use href="#i-user-cog"/></svg></button>
          <button class="top-btn top-btn-mid"><svg class="icon-16"><use href="#i-cog"/></svg></button>
          <button class="top-btn top-btn-power"><svg class="icon-16"><use href="#i-power"/></svg></button>
        </div>
      </header>

      <div class="view">
        <div class="page">
          <div class="breadcrumb">
            <svg class="crumb-home"><use href="#i-home"/></svg>
            <span class="crumb-sep">/</span><span>Sales</span>
            <span class="crumb-sep">/</span><a class="link">Quotes</a>
            <span class="crumb-sep">/</span><span>Detail</span>
            <span class="crumb-sep">/</span><b class="crumb-last">Apartment furnishing</b>
          </div>

          <div class="record-head">
            <svg class="record-icon" viewBox="0 0 39 50">
              <path d="M0 0h26l13 13v37H0z" fill="#212529"/>
              <path d="M25 7v7h7z" fill="#fff"/>
              <path d="M6 12h11v2H6zM6 16h11v2H6zM5 23h29v2.500H5zM5 27.500h29V30H5zM5 32h29v2.500H5zM5 36.500h29V39H5zM5 41h29v2.500H5z" fill="#fff"/>
            </svg>
            <div class="record-title">
              <div>Apartment furnishing</div>
              <div class="record-sub">Assigned To: <a class="link">Alghi Davide</a></div>
            </div>
            <div class="record-actions">
              <div class="btn-group btn-group-outline btn-group-first">
                <button class="act act-eye"><svg class="icon-16"><use href="#i-eye-slash"/></svg></button>
                <button class="act act-plane"><svg class="icon-14"><use href="#i-plane"/></svg></button>
                <button class="act act-secret"><svg class="icon-14"><use href="#i-secret"/></svg></button>
              </div>
              <div class="btn-group btn-group-outline">
                <button class="act act-edit"><svg class="icon-16"><use href="#i-edit"/></svg></button>
                <button class="act act-clone"><svg class="icon-14"><use href="#i-clone"/></svg></button>
              </div>
              <div class="btn-group">
                <button class="act act-fill act-blue"><svg class="icon-14"><use href="#i-archive"/></svg></button>
                <button class="act act-fill act-red"><svg class="icon-14"><use href="#i-trash"/></svg></button>
                <button class="act act-fill act-dark"><svg class="icon-14"><use href="#i-eraser"/></svg></button>
              </div>
            </div>
          </div>

          <div class="tabs">
            <a class="tab">Summary</a>
            <a class="tab tab-active">Details</a>
            <a class="tab">Comments</a>
            <a class="tab tab-updates">Updates<span class="tab-badge">6</span></a>
            <a class="tab-rel tab-rel-first"><svg class="rel-18"><use href="#t-calendar"/></svg>Activities</a>
            <a class="tab-rel"><svg class="rel-doc"><use href="#t-doc"/></svg>Documents</a>
            <a class="tab-rel"><svg class="rel-mail"><use href="#t-mail"/></svg>Corporate emails</a>
            <a class="tab-rel"><svg class="rel-doc"><use href="#t-doc-down"/></svg>Sales Orders</a>
            <a class="tab-rel"><svg class="rel-clock"><use href="#t-doc-clock"/></svg>Recurring Sales Orders</a>
            <a class="tab-rel"><svg class="rel-watch"><use href="#t-stopwatch"/></svg>Time Control</a>
          </div>

          <section class="panel">
            <div class="panel-head"><h4>Basic information</h4><svg class="chevron"><use href="#i-chevron"/></svg></div>
            <div class="fields">
              <div class="lbl">Subject</div><div class="val">Apartment furnishing</div>
              <div class="lbl">Opportunity</div><div class="val val-end"><a class="link">2020 / 01 - apartment furnishing</a></div>
              <div class="lbl">Calculation</div><div class="val"><a class="link">Apartment furnishing</a></div>
              <div class="lbl">Account</div><div class="val val-end"><a class="link">Pinco Pallo</a></div>
              <div class="lbl">Category</div><div class="val"></div>
              <div class="lbl">Status</div><div class="val val-end">In realization</div>
              <div class="lbl">Assigned To</div><div class="val"><a class="link">Alghi Davide</a></div>
              <div class="lbl">Share with users:</div><div class="val val-end"></div>
              <div class="lbl">Company name</div><div class="val">Pinco Pallo</div>
              <div class="lbl">Valid until</div><div class="val val-end"></div>
              <div class="lbl">Private</div><div class="val">No</div>
              <div class="val val-blank"></div>
            </div>
          </section>

          <section class="panel">
            <div class="panel-head"><h4>Description details</h4><svg class="chevron"><use href="#i-chevron"/></svg></div>
            <div class="fields fields-wide">
              <div class="lbl">Description</div><div class="val val-end"></div>
              <div class="lbl">Comments</div><div class="val val-end"></div>
            </div>
          </section>

          <section class="panel">
            <div class="panel-head"><h4>Statistics</h4><svg class="chevron"><use href="#i-chevron"/></svg></div>
            <div class="fields">
              <div class="lbl">Total time [h]</div><div class="val">0</div>
              <div class="lbl">Net Total</div><div class="val val-end">8170 €</div>
              <div class="lbl">Gross amount</div><div class="val">9668,38 €</div>
              <div class="lbl">Discount amount</div><div class="val val-end">245,1</div>
            </div>
          </section>

          <section class="panel">
            <div class="panel-head"><h4>Additional statistics - discount excluded</h4><svg class="chevron"><use href="#i-chevron"/></svg></div>
            <div class="fields">
              <div class="lbl">Services Net Total</div><div class="val">70 €</div>
              <div class="lbl">Products Net Total</div><div class="val val-end">8100 €</div>
              <div class="lbl">Services Profit</div><div class="val">20 €</div>
              <div class="lbl">Products Profit</div><div class="val val-end">2820 €</div>
              <div class="lbl">Services Margin</div><div class="val">28,57%</div>
              <div class="lbl">Products Margin</div><div class="val val-end">40,98%</div>
              <div class="lbl">Services Markup</div><div class="val">40%</div>
              <div class="lbl">Products Markup</div><div class="val val-end">81,48%</div>
            </div>
          </section>

          <section class="panel">
            <div class="panel-head"><h4>System information</h4><svg class="chevron"><use href="#i-chevron"/></svg></div>
            <div class="fields">
              <div class="lbl">Created time</div><div class="val">29.07.2020 17:53</div>
              <div class="lbl">Number</div><div class="val val-end">S-Q1</div>
              <div class="lbl"></div><div class="val"></div>
              <div class="lbl"></div><div class="val val-end"></div>
            </div>
          </section>
        </div>

        <!-- page scrollbar -->
        <div class="scrollbar">
          <span class="scroll-up"></span>
          <span class="scroll-thumb"></span>
          <span class="scroll-down"></span>
        </div>
      </div>
    </div>
  </div>

  <footer class="footer">
    <div class="footer-social">
      <svg class="social"><use href="#i-linkedin"/></svg>
      <svg class="social"><use href="#i-twitter"/></svg>
      <svg class="social"><use href="#i-facebook"/></svg>
      <svg class="social"><use href="#i-github"/></svg>
    </div>
    <div class="footer-text">
      <div>Copyright © YetiForce.com All rights reserved. [ver. 5.2.0] [Page loading time: 0.253s.]</div>
      <div>YetiForce was created thanks to <a class="footer-link">open source project</a> called Vtiger CRM and other open source projects.</div>
    </div>
    <div class="footer-right">
      <svg class="footer-cart"><use href="#i-cart"/></svg>
      <svg class="footer-info"><use href="#i-info"/></svg>
    </div>
  </footer>
</div>

</body>
</html>
```

FILE: styles.css
```css
* {
  box-sizing: border-box;
}
html, body {
  margin: 0;
  padding: 0;
  height: 100%;
  overflow: hidden;
  font-family: "Liberation Sans", Arial, sans-serif;
  font-size: 16px;
  color: #212529;
  background: #fff;
}
svg {
  fill: currentColor;
  display: block;
  flex: none;
}
.sprite {
  display: none;
}
button {
  border: 0;
  padding: 0;
  margin: 0;
  font: inherit;
  color: inherit;
  display: flex;
  align-items: center;
  justify-content: center;
}
.link {
  color: #0b72d9;
}
.icon-14 { width: 14px; height: 14px; }
.icon-15 { width: 15px; height: 15px; }
.icon-16 { width: 16px; height: 16px; }
.icon-20 { width: 21px; height: 17px; }
.icon-up { margin-top: -3px; }

.app {
  height: 100vh;
  display: flex;
  flex-direction: column;
}
.shell {
  flex: 1;
  min-height: 0;
  display: flex;
}

/* sidebar */
.sidebar {
  width: 230px;
  flex: none;
  background: #4a5364;
  color: #f1f3f6;
}
.user-box {
  height: 50px;
  background: #3f6b98;
  display: flex;
  overflow: hidden;
  position: relative;
}
.user-logo {
  width: 39px;
  height: 53px;
  margin: 4px 0 0 4px;
}
.user-text {
  margin-left: 11px;
  color: #e6ebf2;
}
.user-first {
  font-size: 15px;
  line-height: 18px;
}
.user-last {
  font-size: 13px;
  line-height: 18px;
}
.user-role {
  font-size: 11px;
  line-height: 14px;
}
.user-pin {
  width: 12px;
  height: 16px;
  position: absolute;
  top: 3px;
  right: 14px;
}
.menu-item {
  height: 43px;
  display: flex;
  align-items: center;
  padding: 0 12px;
}
.menu-item-tight {
  margin-top: -2px;
}
.menu-icon {
  width: 24px;
  height: 24px;
}
.menu-label {
  margin-left: 18px;
  width: 144px;
  font-size: 15px;
  color: #e6e9ee;
  white-space: nowrap;
  overflow: hidden;
  text-overflow: ellipsis;
}
.menu-plus {
  width: 10px;
  height: 10px;
  margin-left: 10px;
  color: #fff;
}

/* top bar */
.main {
  flex: 1;
  min-width: 0;
  display: flex;
  flex-direction: column;
}
.topbar {
  height: 50px;
  flex: none;
  background: #4a5364;
  display: flex;
  justify-content: space-between;
  align-items: center;
  padding: 0 8px;
}
.search {
  display: flex;
  height: 34px;
  width: 464px;
  background: #fff;
  border-radius: 3px;
  font-size: 14px;
  overflow: hidden;
}
.search-module {
  width: 149px;
  padding-left: 9px;
  line-height: 34px;
  color: #495057;
  position: relative;
  border-right: 1px solid #ced4da;
}
.caret {
  position: absolute;
  right: 9px;
  top: 16px;
  border: 4px solid transparent;
  border-top: 4px solid #5f666d;
  border-bottom: 0;
}
.search-input {
  width: 195px;
  border: 0;
  padding: 0 7px 0 10px;
  font: inherit;
  color: #495057;
  outline: none;
}
.search-input::placeholder {
  color: #6c757d;
  opacity: 1;
}
.search-btn {
  width: 40px;
  border-left: 1px solid #dee2e6;
  color: #212529;
}
.search-btn-narrow { width: 39px; }
.search-btn-last { width: 41px; }
.top-actions {
  display: flex;
  gap: 8px;
}
.top-btn {
  width: 32px;
  height: 34px;
  background: #f8f9fa;
  border-radius: 3px;
  color: #212529;
}
.top-btn-small { width: 27px; }
.top-btn-mid { width: 31px; }
.top-btn-power {
  background: #d25c62;
  color: #fff;
}

/* page */
.view {
  flex: 1;
  min-height: 0;
  display: flex;
}
.page {
  flex: 1;
  min-width: 0;
  overflow: hidden;
}
.scrollbar {
  width: 15px;
  flex: none;
  background: #f1f1f1;
  position: relative;
}
.scroll-up, .scroll-down {
  position: absolute;
  left: 3px;
  border: 4.5px solid transparent;
}
.scroll-up {
  top: 4px;
  border-top: 0;
  border-bottom: 5px solid #a3a3a3;
}
.scroll-down {
  bottom: 4px;
  border-bottom: 0;
  border-top: 5px solid #505050;
}
.scroll-thumb {
  position: absolute;
  top: 15px;
  left: 2px;
  right: 1px;
  height: 333px;
  background: #c1c1c1;
}

.breadcrumb {
  height: 48px;
  background: #f8f9fa;
  display: flex;
  align-items: center;
  padding-left: 9px;
  color: #343a40;
}
.crumb-home {
  width: 18px;
  height: 16px;
  color: #0b72d9;
}
.crumb-sep {
  color: #6c757d;
  margin: 0 8px;
}
.crumb-last {
  color: #495057;
}

.record-head {
  height: 81px;
  display: flex;
  padding: 7px 17px 0 9px;
}
.record-icon {
  width: 39px;
  height: 50px;
  margin-top: 16px;
}
.record-title {
  margin-left: 19px;
  line-height: 21px;
}
.record-sub {
  color: #6c757d;
}
.record-actions {
  margin-left: auto;
  display: flex;
  gap: 7px;
  padding-top: 5px;
  height: 36px;
}
.btn-group {
  display: flex;
  height: 31px;
  border-radius: 3px;
  overflow: hidden;
}
.btn-group-outline {
  border: 1px solid #3f4650;
  color: #3f4650;
}
.btn-group-first {
  margin-right: 1px;
}
.btn-group-outline .act + .act {
  border-left: 1px solid #3f4650;
}
.act-eye { width: 34px; }
.act-plane { width: 31px; }
.act-secret { width: 29px; }
.act-edit { width: 32px; }
.act-clone { width: 31px; }
.act-fill { color: #fff; }
.act-blue { width: 31px; background: #0d2f9e; }
.act-red { width: 29px; background: #ae0011; }
.act-dark { width: 32px; background: #343a40; }

/* tabs */
.tabs {
  display: flex;
  margin: 0 8px;
  height: 39px;
  border-bottom: 3px solid #3f4650;
  font-size: 12.8px;
  font-weight: 700;
  color: #495057;
}
.tab {
  padding: 0 16px;
  margin-right: 2px;
  line-height: 37px;
  position: relative;
}
.tab-active {
  background: #3f4650;
  color: #e9ecef;
}
.tab-updates {
  margin-right: 51px;
}
.tab-badge {
  position: absolute;
  top: -5px;
  left: 67px;
  width: 16px;
  height: 17px;
  background: #dc3545;
  color: #fff;
  border-radius: 3px;
  font-size: 11px;
  line-height: 17px;
  text-align: center;
}
.tab-rel {
  display: flex;
  align-items: center;
  background: #f0f0f0;
  padding: 0 16px;
  margin-right: 2.5px;
  white-space: nowrap;
}
.rel-18 { width: 18px; height: 16px; margin: -3px 3px 0 0; }
.rel-doc { width: 13px; height: 19px; margin: -3px 8px 0 0; }
.rel-mail { width: 17px; height: 14px; margin: 0 4px 0 0; }
.rel-clock { width: 17px; height: 19px; margin: -3px 4px 0 0; }
.rel-watch { width: 15px; height: 18px; margin: -3px 6px 0 0; }

/* panels */
.panel {
  margin: 10px 8px 10px;
  border: 1px solid #dee2e6;
  border-radius: 3px;
}
.panel-head {
  height: 49px;
  background: #f5f5f5;
  border-bottom: 1px solid #dee2e6;
  display: flex;
  align-items: center;
  justify-content: space-between;
  padding: 0 7px 4px 8px;
}
.panel-head h4 {
  margin: 0;
  font-size: 20px;
  font-weight: 400;
  color: #343a40;
}
.chevron {
  width: 11px;
  height: 13px;
  color: #212529;
}
.fields {
  display: grid;
  grid-template-columns: 413px 416px 414px 1fr;
}
.fields-wide {
  grid-template-columns: 414px 1fr;
}
.fields-wide .lbl, .fields-wide .val {
  height: 32px;
}
.fields-wide .lbl {
  padding-bottom: 1px;
}
.lbl {
  height: 35px;
  border-bottom: 1px solid #dee2e6;
  border-right: 1px solid #dee2e6;
  display: flex;
  align-items: center;
  justify-content: flex-end;
  padding: 0 5px 3px 0;
  font-size: 12.8px;
  font-weight: 700;
  color: #343a40;
}
.val {
  height: 35px;
  border-bottom: 1px solid #dee2e6;
  border-right: 1px solid #dee2e6;
  display: flex;
  align-items: center;
  padding-left: 5px;
  color: #343a40;
}
.val-end {
  border-right: 0;
}
.val-blank {
  grid-column: span 2;
  border-right: 0;
}

/* footer */
.footer {
  height: 32px;
  flex: none;
  background: #343a42;
  color: #e9ecef;
  display: flex;
  justify-content: space-between;
  align-items: center;
  padding: 0 8px;
}
.footer-social {
  display: flex;
  gap: 7.5px;
  width: 300px;
}
.social {
  width: 22px;
  height: 22px;
  color: #f8f9fa;
}
.footer-text {
  text-align: center;
  font-size: 10.88px;
  line-height: 16px;
}
.footer-link {
  font-style: italic;
  text-decoration: underline;
}
.footer-right {
  width: 300px;
  display: flex;
  justify-content: flex-end;
  gap: 11px;
  color: #fff;
}
.footer-cart {
  width: 30px;
  height: 26px;
}
.footer-info {
  width: 26px;
  height: 26px;
}
```
